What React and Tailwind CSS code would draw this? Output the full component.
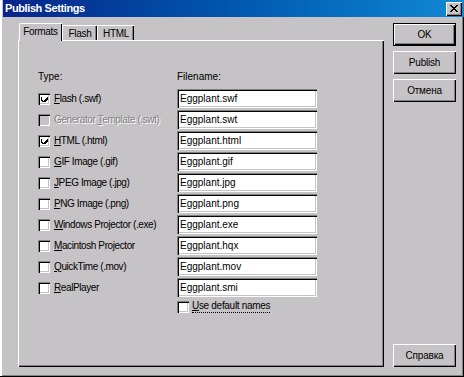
const rows = [
  { pre: '', u: 'F', post: 'lash (.swf)', file: 'Eggplant.swf', checked: true },
  { pre: 'Generator ', u: 'T', post: 'emplate (.swt)', file: 'Eggplant.swt', disabled: true },
  { pre: '', u: 'H', post: 'TML (.html)', file: 'Eggplant.html', checked: true },
  { pre: '', u: 'G', post: 'IF Image (.gif)', file: 'Eggplant.gif' },
  { pre: '', u: 'J', post: 'PEG Image (.jpg)', file: 'Eggplant.jpg' },
  { pre: '', u: 'P', post: 'NG Image (.png)', file: 'Eggplant.png' },
  { pre: '', u: 'W', post: 'indows Projector (.exe)', file: 'Eggplant.exe' },
  { pre: '', u: 'M', post: 'acintosh Projector', file: 'Eggplant.hqx' },
  { pre: '', u: 'Q', post: 'uickTime (.mov)', file: 'Eggplant.mov' },
  { pre: '', u: 'R', post: 'ealPlayer', file: 'Eggplant.smi' },
]

function Checkbox({ checked, disabled }) {
  return (
    <div
      className={`w-[12px] h-[12px] shrink-0 flex items-center justify-center shadow-[inset_1px_1px_0_#848284,inset_2px_2px_0_#000,inset_-1px_-1px_0_#fff,inset_-2px_-2px_0_#c6c3c6] ${
        disabled ? 'bg-[#c6c3c6]' : 'bg-white'
      }`}
    >
      {checked && (
        <svg width="7" height="7" viewBox="0 0 7 7" shapeRendering="crispEdges">
          <path d="M0 2h1v3h1v1h1v-1h1v-1h1v-1h1v-1h1v3h-1v1h-1v1h-1v1h-2v-1h-1v-1h-1z" fill="#000" />
        </svg>
      )}
    </div>
  )
}

function Button({ children, isDefault }) {
  return (
    <div
      className={`w-[63px] h-[23px] flex items-center justify-center bg-[#c6c3c6] ${
        isDefault
          ? 'border border-black shadow-[inset_1px_1px_0_#fff,inset_-1px_-1px_0_#000,inset_-2px_-2px_0_#848284]'
          : 'shadow-[inset_1px_1px_0_#fff,inset_-1px_-1px_0_#000,inset_-2px_-2px_0_#848284]'
      }`}
    >
      {children}
    </div>
  )
}

export default function App() {
  return (
    <div className="w-[464px] h-[377px] bg-[#c6c3c6] flex flex-col font-['Liberation_Sans',Arial,sans-serif] text-[10px] leading-none text-black shadow-[inset_-1px_-1px_0_#000,inset_2px_0_0_#fff,inset_-2px_-2px_0_#848284] overflow-hidden">
      {/* Title bar */}
      <div className="ml-[3px] h-[17px] shrink-0 flex items-center bg-gradient-to-r from-[#08248a] to-[#1288d4]">
        <span className="pl-[2px] text-white font-bold text-[11px] tracking-[-0.4px]">Publish Settings</span>
        <div className="ml-auto mr-[2px] w-[16px] h-[14px] bg-[#c6c3c6] flex items-center justify-center shadow-[inset_1px_1px_0_#fff,inset_-1px_-1px_0_#000,inset_-2px_-2px_0_#848284]">
          <svg width="8" height="7" viewBox="0 0 8 7" shapeRendering="crispEdges">
            <path d="M0 0h2v1h1v1h2v-1h1v-1h2v1h-1v1h-1v1h-1v1h1v1h1v1h1v1h-2v-1h-1v-1h-2v1h-1v1h-2v-1h1v-1h1v-1h1v-1h-1v-1h-1v-1h-1z" fill="#000" />
          </svg>
        </div>
      </div>

      <div className="flex flex-1 pl-[18px] pt-[6px] pb-[10px]">
        {/* Tabs + panel */}
        <div className="w-[366px] flex flex-col">
          <div className="h-[17px] flex items-end pl-[1px] tracking-[-0.3px]">
            <div className="relative z-10 w-[43px] h-[18px] -mb-[1px] bg-[#c6c3c6] border-t border-l border-white rounded-tl-[2px] shadow-[inset_-1px_0_0_#000] pr-[1px] flex items-start justify-center pt-[3px]">
              Formats
            </div>
            <div className="w-[35px] h-[15px] bg-[#c6c3c6] border-t border-l border-white rounded-tl-[2px] shadow-[inset_-1px_0_0_#000,inset_-2px_0_0_#848284] flex items-start justify-center pt-[3px]">
              Flash
            </div>
            <div className="w-[37px] h-[15px] bg-[#c6c3c6] border-t border-l border-white rounded-tl-[2px] shadow-[inset_-1px_0_0_#000,inset_-2px_0_0_#848284] flex items-start justify-center pt-[3px]">
              HTML
            </div>
          </div>

          <div className="h-[327px] border-t border-l border-white shadow-[inset_-1px_-1px_0_#000,inset_-2px_-2px_0_#848284] pl-[19px] pt-[31px]">
            <div className="flex h-[14px]">
              <div className="w-[139px]">Type:</div>
              <div>Filename:</div>
            </div>
            <div className="mt-[3px] flex flex-col gap-[2px]">
              {rows.map((r) => (
                <div key={r.file} className="flex items-center h-[19px]">
                  <div className="w-[139px] flex items-center gap-[4px]">
                    <Checkbox checked={r.checked} disabled={r.disabled} />
                    <span
                      className={`whitespace-nowrap tracking-[-0.4px] ${
                        r.disabled ? 'text-[#848284] [text-shadow:1px_1px_0_#fff]' : ''
                      }`}
                    >
                      {r.pre}
                      <u>{r.u}</u>
                      {r.post}
                    </span>
                  </div>
                  <div className="w-[140px] h-[19px] bg-white flex items-center pl-[3px] shadow-[inset_1px_1px_0_#848284,inset_2px_2px_0_#000,inset_-1px_-1px_0_#fff,inset_-2px_-2px_0_#c6c3c6]">
                    {r.file}
                  </div>
                </div>
              ))}
            </div>
            <div className="mt-[4px] pl-[139px] flex items-center gap-[3px]">
              <Checkbox />
              <span className="border-b border-dotted border-black pb-[1px] tracking-[-0.3px]">
                <u>U</u>se default names
              </span>
            </div>
          </div>
        </div>

        {/* Buttons */}
        <div className="ml-[9px] flex flex-col gap-[5px] tracking-[-0.2px]">
          <Button isDefault>OK</Button>
          <Button>Publish</Button>
          <Button>Отмена</Button>
          <div className="flex-1" />
          <Button>Справка</Button>
        </div>
      </div>
    </div>
  )
}
